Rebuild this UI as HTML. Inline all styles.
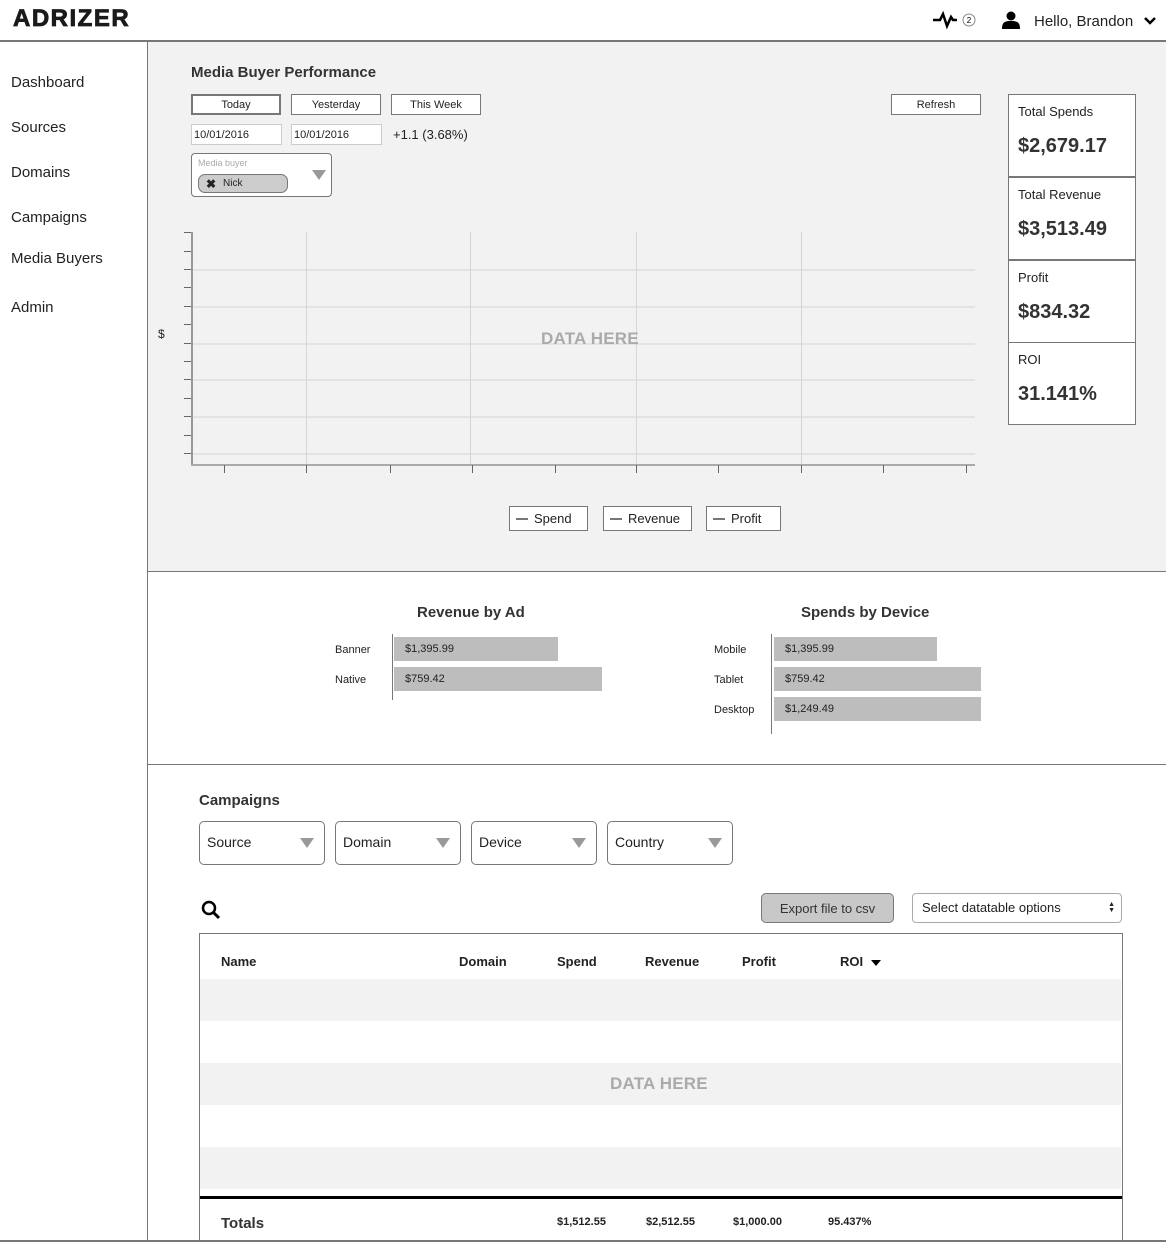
<!DOCTYPE html><html><head><meta charset="utf-8"><style>
*{margin:0;padding:0;box-sizing:border-box}
body{width:1166px;height:1242px;position:relative;background:#fff;font-family:"Liberation Sans",Arial,sans-serif;color:#222;overflow:hidden}
.a{position:absolute}
.btn{position:absolute;border:1px solid #777;background:#fff;font-size:11px;text-align:center;line-height:20px;height:21px}
.in{position:absolute;border:1px solid #ccc;background:#fff;font-size:11px;line-height:20px;height:21px;padding-left:2px}
.nav{position:absolute;left:11px;font-size:15px;color:#222}
.stat{position:absolute;left:1008px;width:128px;background:#fff;border:1px solid #777;padding-left:9px}
.stat .l{font-size:13px;margin-top:9px}
.stat .v{font-size:20px;font-weight:bold;margin-top:16px;color:#333}
.gh{position:absolute;left:192px;width:783px;height:2px;background:#e3e3e3}
.gv{position:absolute;top:232px;height:233px;width:1px;background:#d6d6d6}
.yt{position:absolute;left:184px;width:7px;height:1px;background:#666}
.xt{position:absolute;top:465px;width:1px;height:8px;background:#666}
.leg{position:absolute;top:506px;height:25px;border:1px solid #777;background:#fff;font-size:13px;line-height:23px;padding-left:24px}
.leg:before{content:"";position:absolute;left:6px;top:11px;width:12px;height:2px;background:#777}
.bar{position:absolute;height:24px;background:#bdbdbd;font-size:11px;line-height:25px;padding-left:11px}
.bl{position:absolute;font-size:11px;margin-top:1px}
.dd{position:absolute;top:821px;width:126px;height:44px;border:1px solid #777;border-radius:5px;font-size:14px;line-height:41px;padding-left:7px}
.dd:after{content:"";position:absolute;right:10px;top:16px;border-left:7px solid transparent;border-right:7px solid transparent;border-top:10px solid #999}
.th{position:absolute;top:954px;font-size:13px;font-weight:bold}
.row{position:absolute;left:200px;width:921px;height:42px;background:#f2f2f2}
.tt{position:absolute;top:1216px;font-size:11px;font-weight:bold}
</style></head><body>
<div class="a" style="left:13px;top:5px;font-size:24px;font-weight:900;letter-spacing:1.5px;color:#1a1a1a;-webkit-text-stroke:0.8px #1a1a1a">ADRIZER</div>
<svg class="a" style="left:932px;top:10px" width="46" height="20"><path d="M1 10h7l3-6 4 12 4-9 2 3h4" stroke="#000" stroke-width="2.5" fill="none"/><circle cx="37" cy="10" r="6" fill="#fff" stroke="#888"/><text x="37" y="13" font-size="8" text-anchor="middle" font-family="Liberation Sans">2</text></svg>
<svg class="a" style="left:1002px;top:11px" width="18" height="18"><circle cx="9" cy="5" r="4.5" fill="#000"/><path d="M0 18c0-7 3-8 9-8s9 1 9 8z" fill="#000"/></svg>
<div class="a" style="left:1034px;top:13px;font-size:15px">Hello, Brandon</div>
<svg class="a" style="left:1143px;top:16px" width="14" height="10"><path d="M2 2l5 5 5-5" stroke="#000" stroke-width="2.5" fill="none"/></svg>
<div class="a" style="left:0;top:40px;width:1166px;height:2px;background:#777"></div>
<div class="a" style="left:147px;top:42px;width:1px;height:1200px;background:#777"></div>
<div class="nav" style="top:74px">Dashboard</div>
<div class="nav" style="top:119px">Sources</div>
<div class="nav" style="top:164px">Domains</div>
<div class="nav" style="top:209px">Campaigns</div>
<div class="nav" style="top:250px">Media Buyers</div>
<div class="nav" style="top:299px">Admin</div>
<div class="a" style="left:148px;top:42px;width:1018px;height:529px;background:#f2f2f2"></div>
<div class="a" style="left:191px;top:64px;font-size:15px;font-weight:bold;color:#333">Media Buyer Performance</div>
<div class="btn" style="left:191px;top:94px;width:90px;border:2px solid #777;line-height:18px">Today</div>
<div class="btn" style="left:291px;top:94px;width:90px">Yesterday</div>
<div class="btn" style="left:391px;top:94px;width:90px">This Week</div>
<div class="btn" style="left:891px;top:94px;width:90px">Refresh</div>
<div class="in" style="left:191px;top:124px;width:91px">10/01/2016</div>
<div class="in" style="left:291px;top:124px;width:91px">10/01/2016</div>
<div class="a" style="left:393px;top:127px;font-size:13px">+1.1 (3.68%)</div>
<div class="a" style="left:191px;top:153px;width:141px;height:44px;border:1px solid #777;border-radius:4px;background:#fff">
<div class="a" style="left:6px;top:4px;font-size:9px;color:#aaa">Media buyer</div>
<div class="a" style="left:6px;top:20px;width:90px;height:19px;border:1px solid #777;border-radius:7px;background:#ccc;font-size:10px;line-height:18px;padding-left:24px">Nick<span style="position:absolute;left:7px;top:0;font-size:12px;font-weight:bold">✖</span></div>
<div class="a" style="right:5px;top:16px;border-left:7px solid transparent;border-right:7px solid transparent;border-top:10px solid #999"></div>
</div>
<div class="stat" style="top:94px;height:84px;border-bottom:2px solid #777"><div class="l">Total Spends</div><div class="v">$2,679.17</div></div>
<div class="stat" style="top:177px;height:84px;border-bottom:2px solid #777"><div class="l">Total Revenue</div><div class="v">$3,513.49</div></div>
<div class="stat" style="top:260px;height:83px"><div class="l">Profit</div><div class="v">$834.32</div></div>
<div class="stat" style="top:342px;height:83px"><div class="l">ROI</div><div class="v">31.141%</div></div>
<div class="gh" style="top:269px"></div><div class="gh" style="top:306px"></div><div class="gh" style="top:343px"></div><div class="gh" style="top:379px"></div><div class="gh" style="top:416px"></div><div class="gh" style="top:453px"></div>
<div class="gv" style="left:306px"></div><div class="gv" style="left:470px"></div><div class="gv" style="left:636px"></div><div class="gv" style="left:801px"></div>
<div class="a" style="left:191px;top:232px;width:2px;height:234px;background:#999"></div>
<div class="a" style="left:191px;top:464px;width:784px;height:2px;background:#aaa"></div>
<div class="yt" style="top:232px"></div><div class="yt" style="top:251px"></div><div class="yt" style="top:269px"></div><div class="yt" style="top:287px"></div><div class="yt" style="top:306px"></div><div class="yt" style="top:324px"></div><div class="yt" style="top:343px"></div><div class="yt" style="top:361px"></div><div class="yt" style="top:379px"></div><div class="yt" style="top:398px"></div><div class="yt" style="top:416px"></div><div class="yt" style="top:435px"></div><div class="yt" style="top:453px"></div>
<div class="xt" style="left:224px"></div><div class="xt" style="left:306px"></div><div class="xt" style="left:390px"></div><div class="xt" style="left:472px"></div><div class="xt" style="left:555px"></div><div class="xt" style="left:636px"></div><div class="xt" style="left:718px"></div><div class="xt" style="left:801px"></div><div class="xt" style="left:883px"></div><div class="xt" style="left:966px"></div>
<div class="a" style="left:158px;top:327px;font-size:12px">$</div>
<div class="a" style="left:541px;top:329px;font-size:17px;font-weight:bold;color:#aaa;letter-spacing:0.2px">DATA HERE</div>
<div class="leg" style="left:509px;width:79px">Spend</div>
<div class="leg" style="left:603px;width:89px">Revenue</div>
<div class="leg" style="left:706px;width:75px">Profit</div>
<div class="a" style="left:148px;top:571px;width:1018px;height:1px;background:#777"></div>
<div class="a" style="left:148px;top:764px;width:1018px;height:1px;background:#777"></div>
<div class="a" style="left:417px;top:604px;font-size:15px;font-weight:bold;color:#333">Revenue by Ad</div>
<div class="a" style="left:801px;top:604px;font-size:15px;font-weight:bold;color:#333">Spends by Device</div>
<div class="a" style="left:392px;top:634px;width:1px;height:66px;background:#777"></div>
<div class="a" style="left:771px;top:634px;width:1px;height:100px;background:#777"></div>
<div class="bl" style="left:335px;top:643px">Banner</div><div class="bl" style="left:335px;top:673px">Native</div>
<div class="bar" style="left:394px;top:637px;width:164px">$1,395.99</div>
<div class="bar" style="left:394px;top:667px;width:208px">$759.42</div>
<div class="bl" style="left:714px;top:643px">Mobile</div><div class="bl" style="left:714px;top:673px">Tablet</div><div class="bl" style="left:714px;top:703px">Desktop</div>
<div class="bar" style="left:774px;top:637px;width:163px">$1,395.99</div>
<div class="bar" style="left:774px;top:667px;width:207px">$759.42</div>
<div class="bar" style="left:774px;top:697px;width:207px">$1,249.49</div>
<div class="a" style="left:199px;top:792px;font-size:15px;font-weight:bold;color:#333">Campaigns</div>
<div class="dd" style="left:199px">Source</div><div class="dd" style="left:335px">Domain</div><div class="dd" style="left:471px">Device</div><div class="dd" style="left:607px">Country</div>
<svg class="a" style="left:201px;top:900px" width="22" height="22"><circle cx="8" cy="8" r="6" stroke="#000" stroke-width="2.5" fill="none"/><path d="M12 12l6 6" stroke="#000" stroke-width="3"/></svg>
<div class="a" style="left:761px;top:893px;width:133px;height:30px;border:1px solid #777;border-radius:5px;background:#c8c8c8;font-size:13px;text-align:center;line-height:29px;color:#333">Export file to csv</div>
<div class="a" style="left:912px;top:893px;width:210px;height:30px;border:1px solid #aaa;border-radius:4px;background:#fff;font-size:13px;line-height:27px;padding-left:9px">Select datatable options<span style="position:absolute;right:6px;top:8px;font-size:7px;line-height:6px">▲<br>▼</span></div>
<div class="a" style="left:199px;top:933px;width:924px;height:308px;border:1px solid #777;border-bottom:none"></div>
<div class="th" style="left:221px">Name</div><div class="th" style="left:459px">Domain</div><div class="th" style="left:557px">Spend</div><div class="th" style="left:645px">Revenue</div><div class="th" style="left:742px">Profit</div><div class="th" style="left:840px">ROI</div>
<div class="a" style="left:871px;top:960px;border-left:5px solid transparent;border-right:5px solid transparent;border-top:6px solid #000"></div>
<div class="row" style="top:979px"></div><div class="row" style="top:1063px"></div><div class="row" style="top:1147px"></div>
<div class="a" style="left:610px;top:1074px;font-size:17px;font-weight:bold;color:#aaa;letter-spacing:0.2px">DATA HERE</div>
<div class="a" style="left:200px;top:1196px;width:922px;height:3px;background:#000"></div>
<div class="a" style="left:221px;top:1215px;font-size:15px;font-weight:bold;color:#333">Totals</div>
<div class="tt" style="left:557px">$1,512.55</div><div class="tt" style="left:646px">$2,512.55</div><div class="tt" style="left:733px">$1,000.00</div><div class="tt" style="left:828px">95.437%</div>
<div class="a" style="left:0;top:1240px;width:1166px;height:2px;background:#777"></div>
</body></html>
